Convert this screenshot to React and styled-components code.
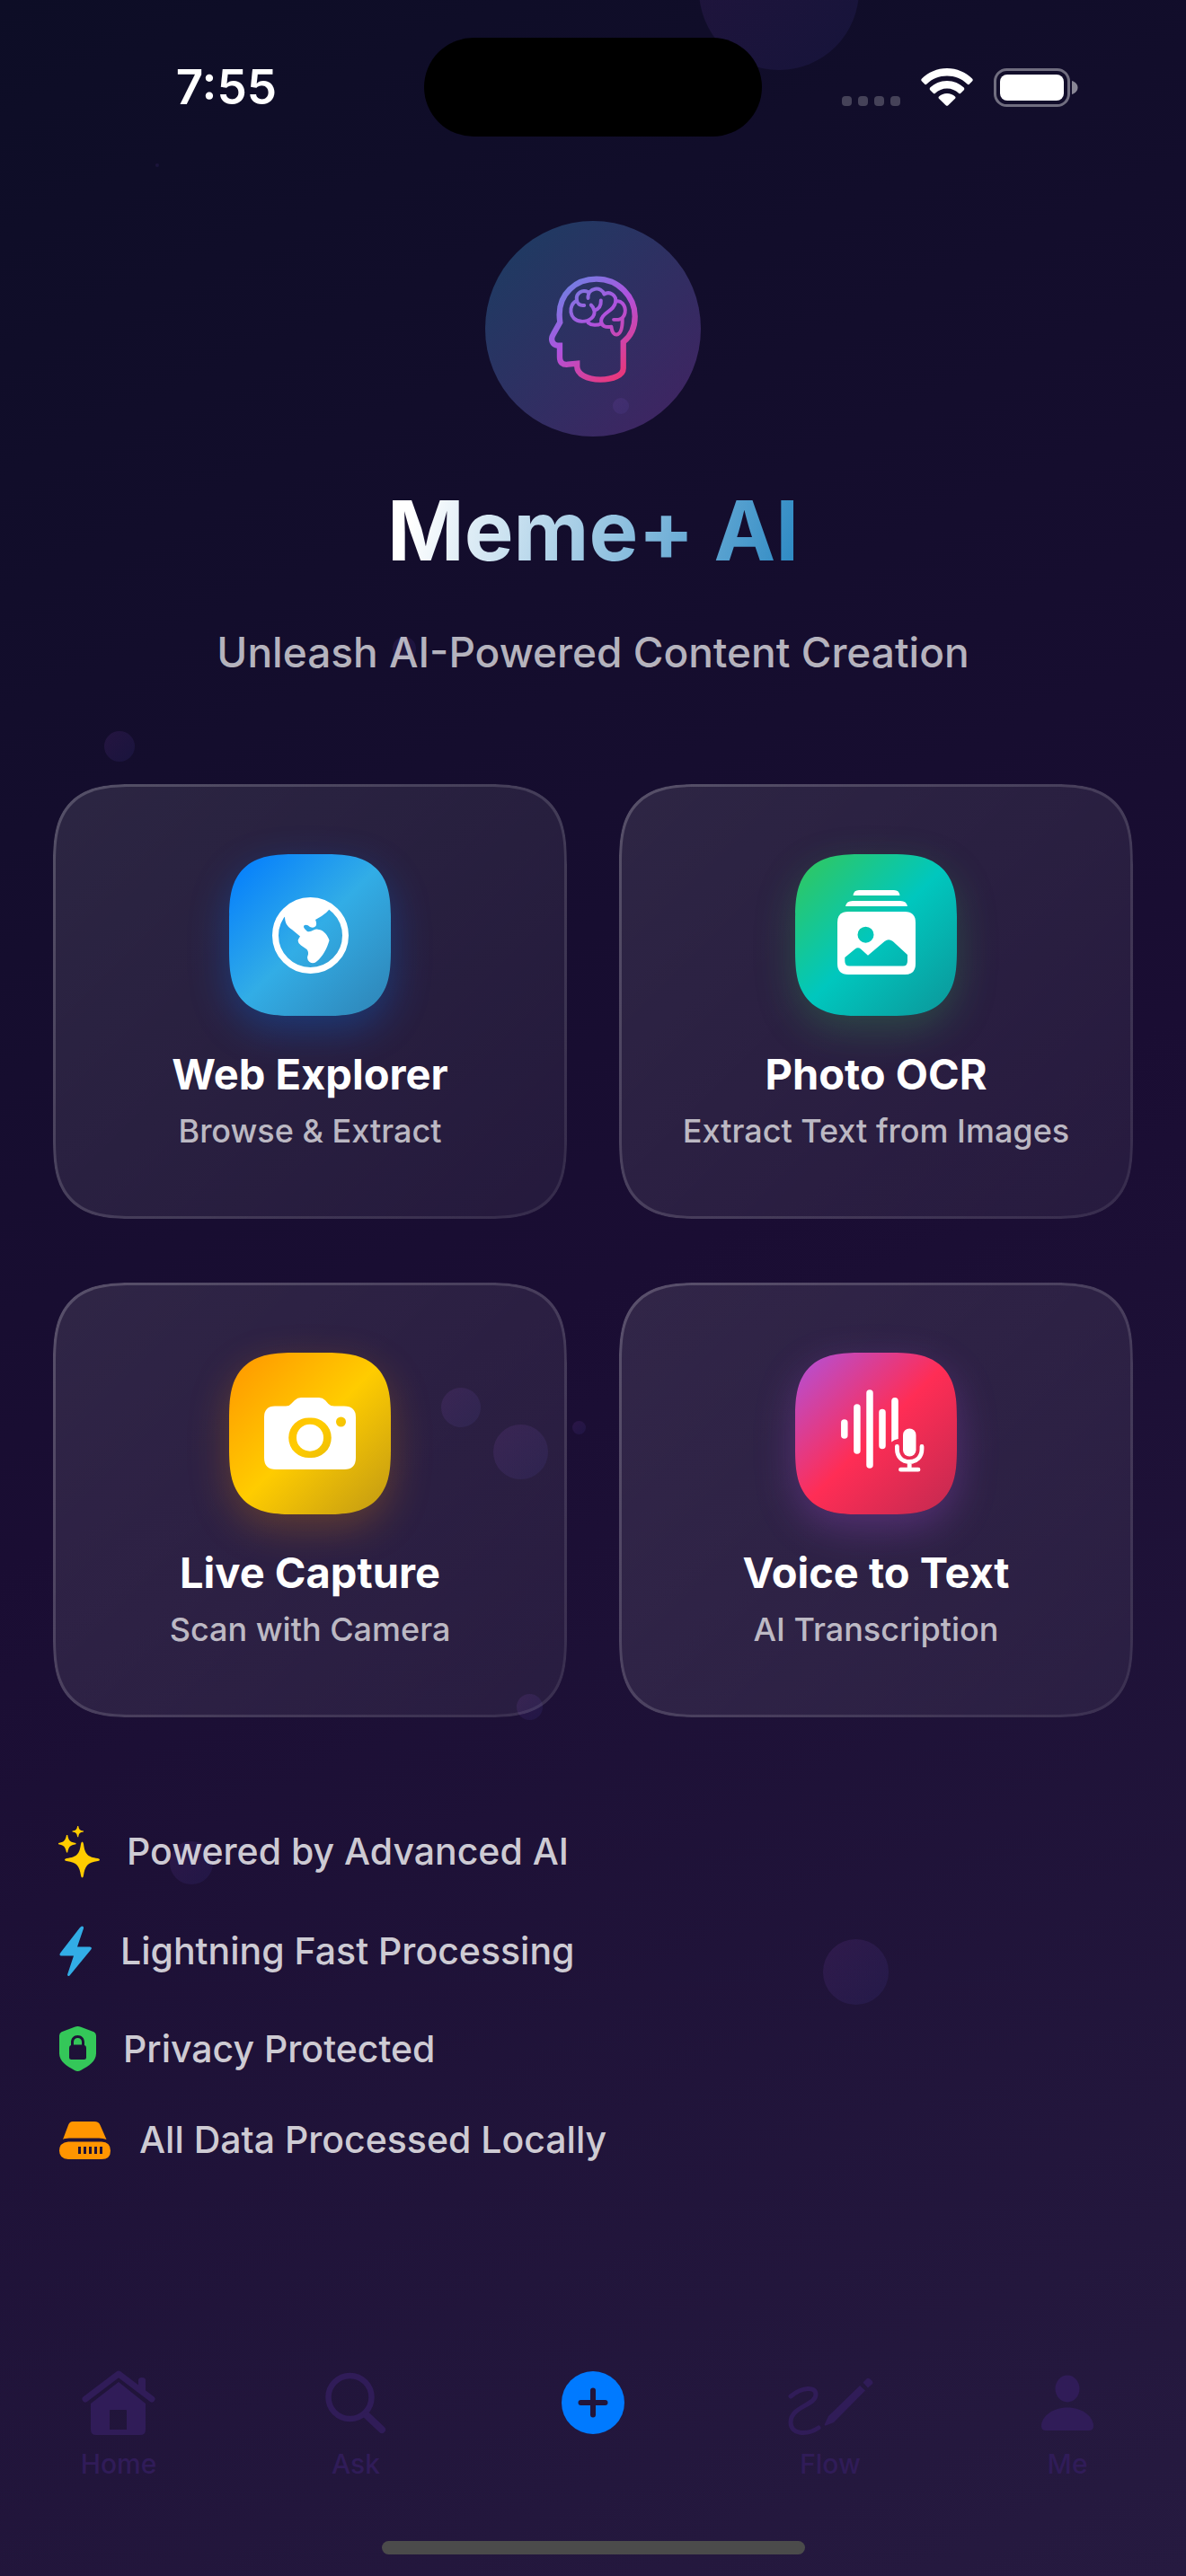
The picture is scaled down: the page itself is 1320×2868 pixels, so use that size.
import React from "react";
import styled, { createGlobalStyle } from "styled-components";

const GlobalStyle = createGlobalStyle`
  * {
    box-sizing: border-box;
  }

  body {
    margin: 0;
    background: #0d0d26;
    font-family: Inter, "Liberation Sans", sans-serif;
    color: #ffffff;
  }
`

const Screen = styled.div`
  position: relative;
  display: flex;
  flex-direction: column;
  min-height: 100vh;
  overflow: hidden;
  background: linear-gradient(155deg, #0d0d26 0%, #1a0d33 50%, #261a40 100%);
`

const Orb = styled.span`
  position: absolute;
  top: ${props => props.$y - props.$size / 2}px;
  left: ${props => props.$x / 13.2}%;
  width: ${props => props.$size}px;
  height: ${props => props.$size}px;
  margin-left: ${props => props.$size / -2}px;
  border-radius: 50%;
  background: linear-gradient(135deg, rgba(175, 82, 222, 0.11), rgba(70, 80, 205, 0.1));
  pointer-events: none;
`

const StatusBar = styled.header`
  position: relative;
  display: grid;
  grid-template-columns: 1fr 376px 1fr;
  align-items: center;
  justify-items: center;
  padding: 42px 32px 0;
`

const Time = styled.time`
  font-size: 53px;
  font-weight: 600;
  line-height: 58px;
`

const Island = styled.div`
  width: 100%;
  height: 110px;
  border-radius: 55px;
  background: #000000;
`

const StatusIcons = styled.div`
  display: flex;
  align-items: center;
  gap: 23px;
`

const Main = styled.main`
  position: relative;
  display: flex;
  flex-direction: column;
  padding: 94px 59px 0;
`

const Hero = styled.section`
  display: flex;
  flex-direction: column;
  align-items: center;
  text-align: center;
`

const Logo = styled.div`
  display: flex;
  align-items: center;
  justify-content: center;
  width: 240px;
  height: 240px;
  border-radius: 50%;
  background: linear-gradient(135deg, rgba(50, 173, 230, 0.3), rgba(175, 82, 222, 0.3));
`

const Title = styled.h1`
  margin: 47px 0 0;
  font-size: 92px;
  font-weight: 700;
  line-height: 116px;
  color: transparent;
  background: linear-gradient(105deg, #ffffff 8%, #2e8ac4 98%);
  background-clip: text;
  -webkit-background-clip: text;
`

const Subtitle = styled.p`
  margin: 48px 0 0;
  font-size: 46px;
  font-weight: 500;
  line-height: 58px;
  color: rgba(255, 255, 255, 0.7);
`

const CardGrid = styled.section`
  display: grid;
  grid-template-columns: 1fr 1fr;
  gap: 71px 58px;
  margin-top: 118px;
`

const Card = styled.button`
  position: relative;
  display: flex;
  flex-direction: column;
  align-items: center;
  padding: 78px 24px 76px;
  border: 0;
  border-radius: 68px;
  background: linear-gradient(135deg, rgba(255, 255, 255, 0.1), rgba(255, 255, 255, 0.05));
  font-family: inherit;
  color: #ffffff;

  &::before {
    content: "";
    position: absolute;
    inset: 0;
    padding: 3px;
    border-radius: inherit;
    background: linear-gradient(135deg, rgba(255, 255, 255, 0.2), rgba(255, 255, 255, 0.08));
    mask: linear-gradient(#000 0 0) content-box exclude, linear-gradient(#000 0 0);
  }

  @supports (corner-shape: round) {
    border-radius: 90px;
    corner-shape: superellipse(1.5);

    &::before {
      corner-shape: inherit;
    }
  }
`

const CardIcon = styled.span`
  display: flex;
  align-items: center;
  justify-content: center;
  width: 180px;
  height: 180px;
  border-radius: 54px;
  background: linear-gradient(135deg, ${props => props.$colors});
  box-shadow: 0 15px 45px ${props => props.$glow};

  @supports (corner-shape: round) {
    border-radius: 74px;
    corner-shape: superellipse(1.5);
  }
`

const CardTitle = styled.span`
  margin-top: 36px;
  font-size: 47px;
  font-weight: 700;
  line-height: 58px;
`

const CardText = styled.span`
  margin-top: 12px;
  font-size: 36px;
  font-weight: 500;
  line-height: 44px;
  color: rgba(255, 255, 255, 0.7);
`

const FeatureList = styled.ul`
  display: flex;
  flex-direction: column;
  gap: 48px;
  margin: 119px 0 0;
  padding: 0 1px;
  list-style: none;
`

const Feature = styled.li`
  display: flex;
  align-items: center;
  gap: 31px;
  font-size: 41px;
  font-weight: 500;
  line-height: 50px;
  color: rgba(255, 255, 255, 0.8);

  svg {
    overflow: visible;
  }
`

const TabBar = styled.nav`
  position: relative;
  display: grid;
  grid-template-columns: repeat(5, 1fr);
  align-items: start;
  justify-items: center;
  margin-top: auto;
  padding-top: 48px;
`

const Tab = styled.a`
  display: flex;
  flex-direction: column;
  align-items: center;
  gap: 10px;
  font-size: 30px;
  font-weight: 500;
  line-height: 36px;
  color: #301c58;
  text-decoration: none;

  svg {
    height: 80px;
  }
`

const AddButton = styled.button`
  display: flex;
  padding: 5px 0;
  border: 0;
  background: none;
  color: #007aff;
`

const HomeIndicator = styled.div`
  align-self: center;
  width: 471px;
  height: 15px;
  margin: 68px 0 24px;
  border-radius: 8px;
  background: #4b4b4b;
`

const orbs = [
  { x: 867, y: -11, size: 178 },
  { x: 175, y: 184, size: 4 },
  { x: 691, y: 452, size: 18 },
  { x: 450, y: 722, size: 26 },
  { x: 133, y: 831, size: 34 },
  { x: 513, y: 1567, size: 44 },
  { x: 579, y: 1616, size: 61 },
  { x: 644, y: 1589, size: 15 },
  { x: 590, y: 1900, size: 29 },
  { x: 213, y: 2074, size: 48 },
  { x: 952, y: 2195, size: 73 },
];

function SignalIcon() {
  return (
    <svg width="65" height="42" viewBox="0 0 65 42" fill="#fff" fillOpacity="0.22">
      {[0, 18, 36, 54].map(x => (
        <rect key={x} x={x} y="31" width="11" height="11" rx="4" />
      ))}
    </svg>
  )
}

function WifiIcon() {
  return (
    <svg width="58" height="42" viewBox="0 0 58 42" fill="#fff">
      <path d="M29 0C40 0 50 4.500 57 11.500Q58.500 13 57 14.500L53.500 18Q52.500 18.500 51.500 17.500C45.500 11.500 37.500 8.500 29 8.500S12.500 11.500 6.500 17.500Q5.500 18.500 4.500 18L1 14.500Q-.5 13 1 11.500C8 4.500 18 0 29 0Z" />
      <path d="M29 14C36.500 14 43 17 47.800 21.500Q49 23 47.800 24.300L44 28Q43 28.700 42 27.800C38.500 24.500 34 22.500 29 22.500S19.500 24.500 16 27.800Q15 28.700 14 28L10.200 24.300Q9 23 10.200 21.500C15 17 21.500 14 29 14Z" />
      <path d="M29 28C32.500 28 35.700 29.300 38 31.500Q39 32.700 38 33.800L30.300 41.300Q29 42.400 27.700 41.300L20 33.800Q19 32.700 20 31.500C22.300 29.300 25.500 28 29 28Z" />
    </svg>
  )
}

function BatteryIcon() {
  return (
    <svg width="94" height="43" viewBox="0 0 94 43">
      <rect x="1.500" y="1.500" width="82" height="40" rx="13" fill="none" stroke="#fff" strokeOpacity="0.4" strokeWidth="3" />
      <rect x="7" y="7" width="71" height="29" rx="8" fill="#fff" />
      <path d="M87 14C91 15.500 93.500 18 93.500 21.500S91 27.500 87 29Z" fill="#fff" fillOpacity="0.5" />
    </svg>
  )
}

function BrainIcon() {
  return (
    <svg width="99" height="119" viewBox="273 231 298 356" fill="none" stroke="url(#brain)">
      <defs>
        <linearGradient id="brain" gradientUnits="userSpaceOnUse" x1="154" y1="192" x2="525" y2="655">
          <stop offset="0" stopColor="#32ade6" />
          <stop offset="0.54" stopColor="#af52de" />
          <stop offset="1" stopColor="#ff2d55" />
        </linearGradient>
      </defs>
      <path strokeWidth="19" d="M522 452V540C522 563 488 578 445 578C400 578 367 560 367 534V524L337 527C318 529 309 520 309 503V464H304C283 462 277 443 288 425L310 386C309 378 308 370 308 360C308 292 360 241 432 241C506 241 561 300 561 366C561 403 546 433 522 452Z" />
      <g strokeWidth="12" strokeLinecap="round" strokeLinejoin="round">
        <path d="M366 314C336 326 339 381 382 383C410 384 428 366 425 347C423 338 419 332 414 328" />
        <path d="M391 329C376 331 367 323 366 310C363 288 384 275 405 285" />
        <path d="M404 305C402 268 450 264 458 292C476 280 500 295 496 318C492 349 451 352 448 379C446 398 462 404 482 401C484 420 491 428 500 427C515 425 519 403 519 376" />
        <path d="M490 377H506C530 372 535 340 519 322C513 316 505 314 497 316" />
        <path d="M404 387C415 397 435 397 449 390M425 346C439 342 448 331 447 313" />
      </g>
    </svg>
  )
}

function GlobeIcon() {
  return (
    <svg width="85" height="85" viewBox="0 0 85 85" fill="#fff">
      <circle cx="42.500" cy="42.500" r="39" fill="none" stroke="#fff" strokeWidth="7" />
      <path d="M9 24C16 8 29 3 43 3C52 3 59 6 65 10L63 14Q58 20 48 25Q50 29 48.500 32Q46 35 42 33Q39 30 36 31Q34 32 36 35L39 38Q42 39 46 36.500Q49 35 52 36C58 37 62 43 63.500 48C61 57 56 66 50 71Q46 75 41.500 72Q38 69 39.500 65Q41 61 38.500 58L32 53.500Q27 50 29.500 46L31 43.500L22 36C16 32 14 28 14 21Z" />
    </svg>
  )
}

function PhotoStackIcon() {
  return (
    <svg width="87" height="100" viewBox="0 0 87 100" fill="#fff">
      <path d="M17.500 6Q18 0 24 0H63Q69 0 69.500 6ZM9 18Q10 12 17 12H70Q77 12 78 18Z" />
      <path fillRule="evenodd" d="M12 24H75Q87 24 87 36V82Q87 94 75 94H12Q0 94 0 82V36Q0 24 12 24ZM31.500 40.700A9 9 0 1 0 31.500 58.700A9 9 0 1 0 31.500 40.700ZM8.300 75L19.800 65.500Q23 63 26 65.500L34 72.700L52.600 57Q57 53.500 61.700 57L78 72V79Q78 84.500 73 84.500H13.500Q8.300 84.500 8.300 79Z" />
    </svg>
  )
}

function CameraIcon() {
  return (
    <svg width="102" height="80" viewBox="0 0 102 80" fill="#fff">
      <path fillRule="evenodd" d="M12 9.500H24Q28 9.500 30 7L34 3Q37 0 41 0H61Q65 0 68 3L71.500 7Q74 9.500 78 9.500H89Q102 9.500 102 22V67Q102 80 89 80H13Q0 80 0 67V22Q0 9.500 12 9.500ZM51 22.500A22.300 22.300 0 1 0 51 67A22.300 22.300 0 1 0 51 22.500ZM85.500 21.500A5.500 5.500 0 1 0 85.500 32.500A5.500 5.500 0 1 0 85.500 21.500Z" />
      <circle cx="51" cy="44.700" r="15" />
    </svg>
  )
}

function VoiceIcon() {
  return (
    <svg width="107" height="98" viewBox="-14 0 107 98" fill="none" stroke="#fff" strokeLinecap="round">
      <path strokeWidth="7.500" d="M3.800 37V51M17.900 20V68M32 4V84M46 25.500V62.500" />
      <path fill="#fff" stroke="none" d="M56.200 13Q56.200 9 60 9T63.800 13V55Q59 55.500 56.200 58.500Z" />
      <rect x="69" y="43.500" width="14.500" height="31" rx="7.200" fill="#fff" stroke="none" />
      <path strokeWidth="4.800" d="M62.400 63.500V66C62.400 75 68 80.500 76.200 80.500S90 75 90 66V63.500M76.200 81V88M66.500 89.200H86" />
    </svg>
  )
}

function SparklesIcon() {
  return (
    <svg width="50" height="60" viewBox="0 0 50 60" fill="#ffcc00">
      <path d="M31.500 19.500Q32.500 19.500 33 22C34.500 33 37 36.500 49 38Q51 38.500 51 39.500T49 41C37 42.500 34.500 47 33 57Q32.500 59.500 31.500 59.500T30 57C28.500 47 26 42.500 14 41Q12 40.500 12 39.500T14 38C26 36.500 28.500 33 30 22Q30.500 19.500 31.500 19.500Z" />
      <path d="M14 12H15.200C16.500 18.500 18 20 24.500 21V22.300C18 23.300 16.500 25 15.200 31.500H14C12.700 25 11 23.300 5 22.300V21C11 20 12.700 18.500 14 12Z" />
      <path d="M26.200 2H27.200C28 6 28.700 6.900 33 7.600V8.600C28.700 9.300 28 10 27.200 14.300H26.200C25.400 10 24.700 9.300 20.500 8.600V7.600C24.700 6.900 25.400 6 26.200 2Z" />
    </svg>
  )
}

function BoltIcon() {
  return (
    <svg width="43" height="66" viewBox="0 0 43 66" fill="#32ade6">
      <path d="M31 5.500Q33.500 5.500 33 8L26 28.500H40Q43 29 41.300 31.500L17.500 60.500Q15.500 62 15 59.500L22 38.500H8Q5.500 38 7 35.500L29 7Z" />
    </svg>
  )
}

function ShieldIcon() {
  return (
    <svg width="46" height="56" viewBox="0 0 46 56" fill="#34c759">
      <path fillRule="evenodd" d="M23 3.800Q26.500 2.300 30 3.800L44.500 9.200Q47 10.500 47 13.500V33C47 42 39 47 30 52Q26.500 54 23 52C14 47 6 42 6 33V13.500Q6 10.500 8.500 9.200ZM19 21V24Q17 24.500 17 27V37.500Q17 40 19.500 40H33.500Q36 40 36 37.500V27Q36 24.500 34 24V21C34 16 31 13 26.500 13S19 16 19 21ZM22 23.500V20.500C22 17.500 24 16 26.500 16S31 17.500 31 20.500V23.500Z" />
    </svg>
  )
}

function DriveIcon() {
  return (
    <svg width="64" height="50" viewBox="0 0 64 50" fill="#ff9500">
      <path d="M21 5H45Q50 5 51.500 9L58.500 25Q55 23.500 50 23.500H17Q12 23.500 10 25L16 9Q17.500 5 21 5Z" />
      <path fillRule="evenodd" d="M16 27.500H53Q63 28 63 37.500T53 47H16Q6 46.500 6 37.500T16 27.500ZM27 33V41H30V33ZM33 33V41H36V33ZM39 33V41H42V33ZM45 33V41H48V33ZM51 33V41H54V33Z" />
    </svg>
  )
}

function HouseIcon() {
  return (
    <svg width="82" height="80" viewBox="0 0 82 80" fill="currentColor">
      <path d="M4 36L41 8L78 36" fill="none" stroke="currentColor" strokeWidth="7" strokeLinecap="round" strokeLinejoin="round" />
      <path d="M63 28V15Q63 12 67 12T71 15V34Z" />
      <path fillRule="evenodd" d="M41 17L71 41V70Q71 76 65 76H16Q10 76 10 70V41ZM32 48Q31 48 31 49V70H50V49Q50 48 49 48Z" />
    </svg>
  )
}

function SearchIcon() {
  return (
    <svg width="68" height="80" viewBox="0 0 68 80" fill="none" stroke="currentColor" strokeLinecap="round">
      <circle cx="27.500" cy="34" r="24" strokeWidth="6.500" />
      <path strokeWidth="8" d="M46 54L63 70" />
    </svg>
  )
}

function PlusIcon() {
  return (
    <svg width="70" height="70" viewBox="0 0 70 70" fill="none">
      <circle cx="35" cy="35" r="35" fill="currentColor" />
      <path stroke="#22153a" strokeWidth="6" strokeLinecap="round" d="M35 21.500V48.500M21.500 35H48.500" />
    </svg>
  )
}

function ScribbleIcon() {
  return (
    <svg width="95" height="80" viewBox="0 0 95 80" fill="currentColor">
      <path fill="none" stroke="currentColor" strokeWidth="5" strokeLinecap="round" d="M3 33C15 23 31 21 31 31C31 43 3 44 3 62C3 75 20 77 34 68" />
      <path d="M80 21L86 26.500L51 62L42 65.500Q40 66 41 63.500L45 55ZM83.500 17.500L88 13Q90 12 93 15T93 20L89 23.500Z" />
    </svg>
  )
}

function PersonIcon() {
  return (
    <svg width="58" height="80" viewBox="0 0 58 80" fill="currentColor">
      <ellipse cx="29" cy="24.500" rx="13.500" ry="15" />
      <path d="M29 45.500C46 45.500 58 56 58 66Q58 71 53 71H5Q0 71 0 66C0 56 12 45.500 29 45.500Z" />
    </svg>
  )
}

const cards = [
  {
    title: "Web Explorer",
    text: "Browse & Extract",
    icon: <GlobeIcon />,
    colors: "#007aff, #32ade6, rgba(50, 173, 230, 0.7)",
    glow: "rgba(0, 122, 255, 0.3)",
  },
  {
    title: "Photo OCR",
    text: "Extract Text from Images",
    icon: <PhotoStackIcon />,
    colors: "#34c759, #00c7be, rgba(0, 199, 190, 0.7)",
    glow: "rgba(52, 199, 89, 0.25)",
  },
  {
    title: "Live Capture",
    text: "Scan with Camera",
    icon: <CameraIcon />,
    colors: "#ff9500, #ffcc00, rgba(255, 204, 0, 0.7)",
    glow: "rgba(255, 149, 0, 0.25)",
  },
  {
    title: "Voice to Text",
    text: "AI Transcription",
    icon: <VoiceIcon />,
    colors: "#af52de, #ff2d55, rgba(255, 45, 85, 0.7)",
    glow: "rgba(175, 82, 222, 0.3)",
  },
];

const features = [
  { icon: <SparklesIcon />, text: "Powered by Advanced AI" },
  { icon: <BoltIcon />, text: "Lightning Fast Processing" },
  { icon: <ShieldIcon />, text: "Privacy Protected" },
  { icon: <DriveIcon />, text: "All Data Processed Locally" },
];

export default function App() {
  return (
    <>
      <GlobalStyle />
      <Screen>
        {orbs.map(orb => (
          <Orb key={orb.y} $x={orb.x} $y={orb.y} $size={orb.size} />
        ))}
        <StatusBar>
          <Time>7:55</Time>
          <Island />
          <StatusIcons>
            <SignalIcon />
            <WifiIcon />
            <BatteryIcon />
          </StatusIcons>
        </StatusBar>
        <Main>
          <Hero>
            <Logo>
              <BrainIcon />
            </Logo>
            <Title>Meme+ AI</Title>
            <Subtitle>Unleash AI-Powered Content Creation</Subtitle>
          </Hero>
          <CardGrid>
            {cards.map(card => (
              <Card key={card.title} type="button">
                <CardIcon $colors={card.colors} $glow={card.glow}>
                  {card.icon}
                </CardIcon>
                <CardTitle>{card.title}</CardTitle>
                <CardText>{card.text}</CardText>
              </Card>
            ))}
          </CardGrid>
          <FeatureList>
            {features.map(feature => (
              <Feature key={feature.text}>
                {feature.icon}
                {feature.text}
              </Feature>
            ))}
          </FeatureList>
        </Main>
        <TabBar>
          <Tab href="#home"><HouseIcon />Home</Tab>
          <Tab href="#ask"><SearchIcon />Ask</Tab>
          <AddButton type="button" aria-label="Add">
            <PlusIcon />
          </AddButton>
          <Tab href="#flow"><ScribbleIcon />Flow</Tab>
          <Tab href="#me"><PersonIcon />Me</Tab>
        </TabBar>
        <HomeIndicator />
      </Screen>
    </>
  )
}
